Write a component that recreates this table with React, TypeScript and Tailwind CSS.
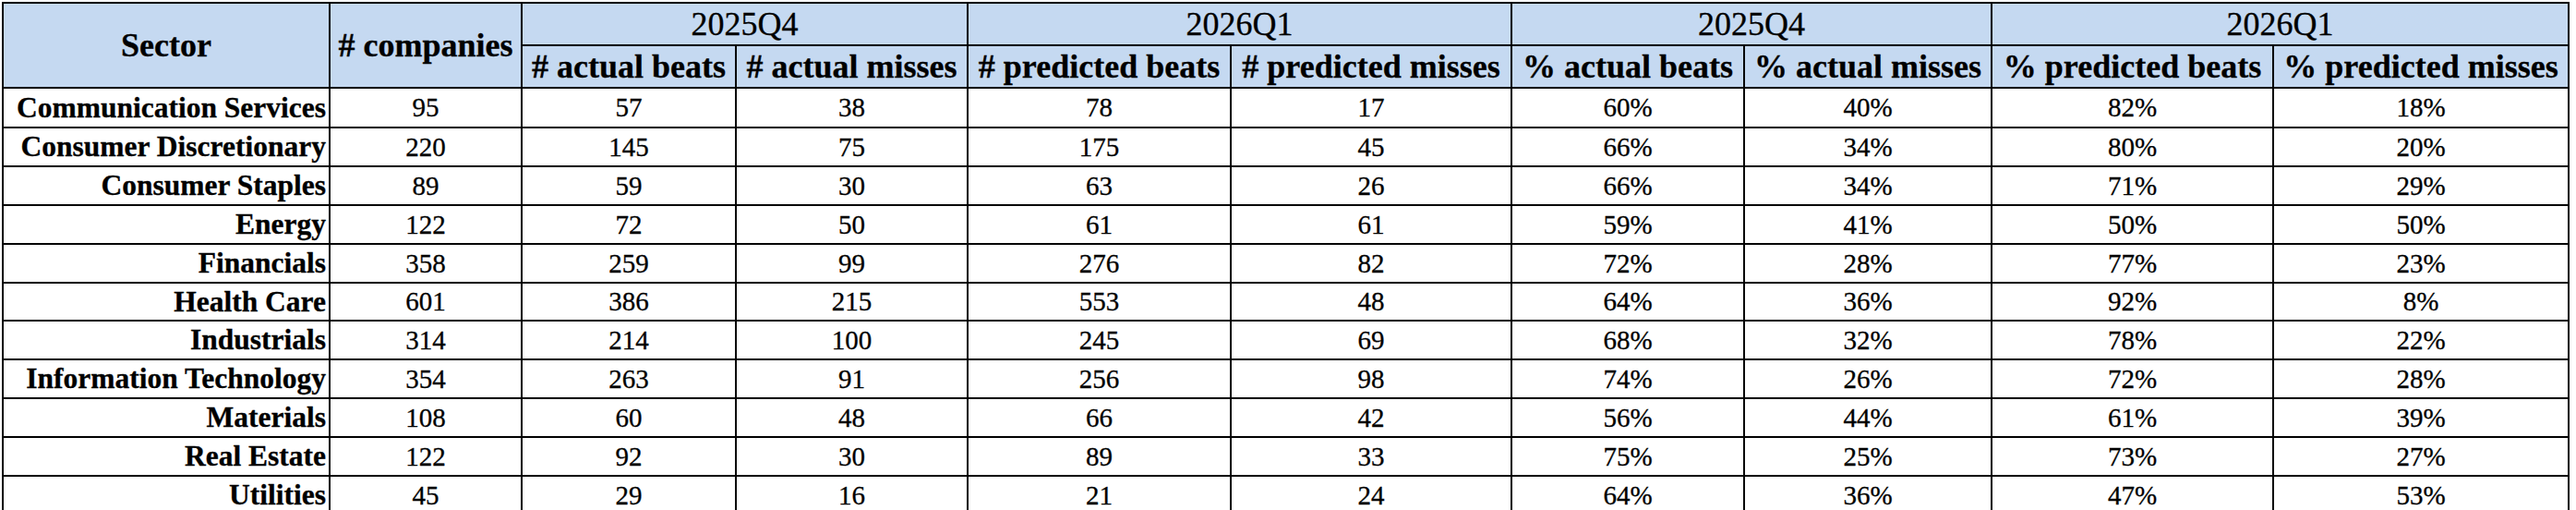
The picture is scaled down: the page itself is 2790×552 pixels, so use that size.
import React from "react";

type Row = {
  sector: string;
  companies: number;
  actualBeats: number;
  actualMisses: number;
  predBeats: number;
  predMisses: number;
  pctActualBeats: string;
  pctActualMisses: string;
  pctPredBeats: string;
  pctPredMisses: string;
};

const rows: Row[] = [
  ["Communication Services", 95, 57, 38, 78, 17, "60%", "40%", "82%", "18%"],
  ["Consumer Discretionary", 220, 145, 75, 175, 45, "66%", "34%", "80%", "20%"],
  ["Consumer Staples", 89, 59, 30, 63, 26, "66%", "34%", "71%", "29%"],
  ["Energy", 122, 72, 50, 61, 61, "59%", "41%", "50%", "50%"],
  ["Financials", 358, 259, 99, 276, 82, "72%", "28%", "77%", "23%"],
  ["Health Care", 601, 386, 215, 553, 48, "64%", "36%", "92%", "8%"],
  ["Industrials", 314, 214, 100, 245, 69, "68%", "32%", "78%", "22%"],
  ["Information Technology", 354, 263, 91, 256, 98, "74%", "26%", "72%", "28%"],
  ["Materials", 108, 60, 48, 66, 42, "56%", "44%", "61%", "39%"],
  ["Real Estate", 122, 92, 30, 89, 33, "75%", "25%", "73%", "27%"],
  ["Utilities", 45, 29, 16, 21, 24, "64%", "36%", "47%", "53%"],
].map(([sector, companies, actualBeats, actualMisses, predBeats, predMisses, a, b, c, d]) => ({
  sector: sector as string,
  companies: companies as number,
  actualBeats: actualBeats as number,
  actualMisses: actualMisses as number,
  predBeats: predBeats as number,
  predMisses: predMisses as number,
  pctActualBeats: a as string,
  pctActualMisses: b as string,
  pctPredBeats: c as string,
  pctPredMisses: d as string,
}));

// row heights follow the spreadsheet's uneven pixel rows
const rowHeights = ["h-[43px]", "h-[42px]", "h-[42px]", "h-[42px]", "h-[42px]", "h-[41px]", "h-[42px]", "h-[42px]", "h-[42px]", "h-[42px]", "h-[42px]"];

const cell = "border-r-2 border-b-2 border-black p-0 align-middle";
const head = `${cell} bg-[#c5d9f1] text-center text-[36px] leading-none`;
const num = `${cell} text-center text-[29px] leading-none`;

export default function App() {
  return (
    <div className="w-[2790px] h-[552px] overflow-hidden bg-white pl-[2px] pt-[2px] text-black [font-family:'Liberation_Serif','Times_New_Roman',serif] [-webkit-text-stroke:0.3px_black]">
      <table className="table-fixed border-separate border-spacing-0 border-l-2 border-t-2 border-black w-[2781px]">
        <colgroup>
          <col className="w-[354px]" />
          <col className="w-[208px]" />
          <col className="w-[232px]" />
          <col className="w-[251px]" />
          <col className="w-[285px]" />
          <col className="w-[304px]" />
          <col className="w-[252px]" />
          <col className="w-[268px]" />
          <col className="w-[305px]" />
          <col className="w-[320px]" />
        </colgroup>
        <thead>
          <tr className="h-[46px]">
            <th rowSpan={2} className={`${head} font-bold`}>Sector</th>
            <th rowSpan={2} className={`${head} font-bold`}># companies</th>
            <th colSpan={2} className={`${head} font-normal`}>2025Q4</th>
            <th colSpan={2} className={`${head} font-normal`}>2026Q1</th>
            <th colSpan={2} className={`${head} font-normal`}>2025Q4</th>
            <th colSpan={2} className={`${head} font-normal`}>2026Q1</th>
          </tr>
          <tr className="h-[46px]">
            <th className={`${head} font-bold`}># actual beats</th>
            <th className={`${head} font-bold`}># actual misses</th>
            <th className={`${head} font-bold`}># predicted beats</th>
            <th className={`${head} font-bold`}># predicted misses</th>
            <th className={`${head} font-bold`}>% actual beats</th>
            <th className={`${head} font-bold`}>% actual misses</th>
            <th className={`${head} font-bold`}>% predicted beats</th>
            <th className={`${head} font-bold`}>% predicted misses</th>
          </tr>
        </thead>
        <tbody>
          {rows.map((r, i) => (
            <tr key={r.sector} className={rowHeights[i]}>
              <td className={`${cell} text-right pr-[3px] text-[31.5px] font-bold leading-none whitespace-nowrap`}>{r.sector}</td>
              <td className={num}>{r.companies}</td>
              <td className={num}>{r.actualBeats}</td>
              <td className={num}>{r.actualMisses}</td>
              <td className={num}>{r.predBeats}</td>
              <td className={num}>{r.predMisses}</td>
              <td className={num}>{r.pctActualBeats}</td>
              <td className={num}>{r.pctActualMisses}</td>
              <td className={num}>{r.pctPredBeats}</td>
              <td className={num}>{r.pctPredMisses}</td>
            </tr>
          ))}
        </tbody>
      </table>
    </div>
  );
}
